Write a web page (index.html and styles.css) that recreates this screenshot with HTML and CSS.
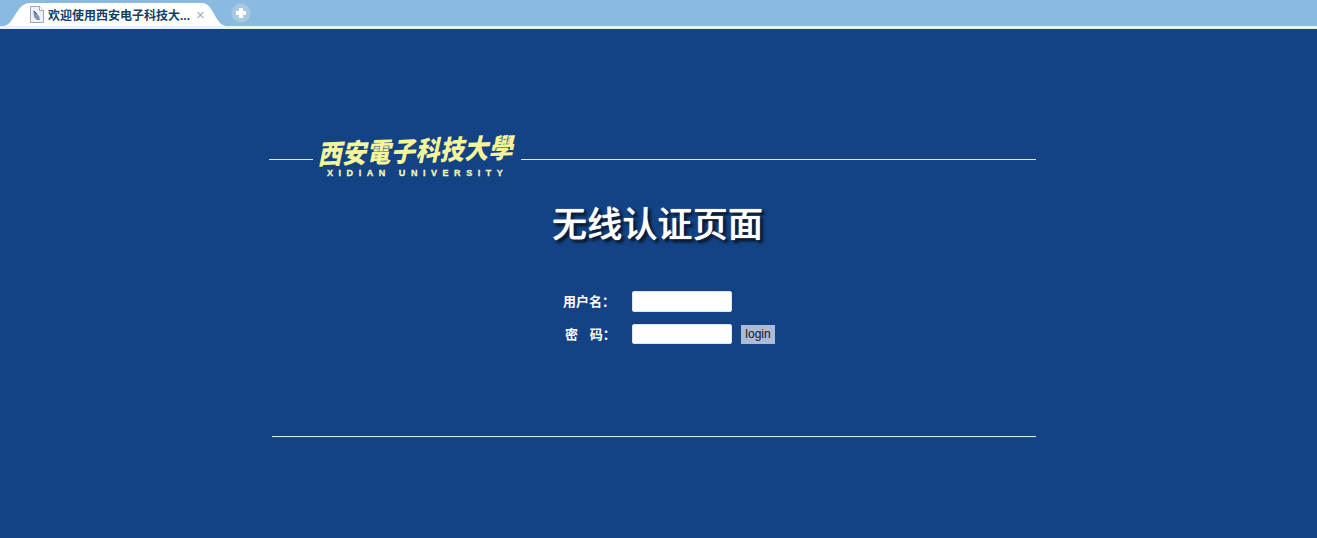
FILE: index.html
```html
<!DOCTYPE html>
<html lang="zh">
<head>
<meta charset="utf-8">
<title>无线认证页面</title>
<link rel="stylesheet" href="styles.css">
</head>
<body>
<header class="tabbar">
  <div class="tab">
    <svg class="tab-shape" width="240" height="26" viewBox="0 0 240 26"><path d="M4 26C15 24 16 3 30 3H202C214 3 214 24 226 26Z" fill="#fff"/></svg>
    <svg class="favicon" width="15" height="17" viewBox="0 0 15 17"><path d="M1.5.5h9l4 4v12h-13z" fill="#eef2f7" stroke="#9aa8ba"/><path d="M10.5.5v4h4" fill="#fff" stroke="#9aa8ba"/><path d="M4 4l6 6 1 4-3 0-3-3z" fill="#7d93b2"/><path d="M5 5l3 3" stroke="#2f4f7f"/></svg>
    <span class="tab-title">欢迎使用西安电子科技大...</span>
    <span class="tab-close">×</span>
  </div>
  <div class="newtab"><span class="newtab-plus"></span></div>
</header>
<main class="page">
  <section class="panel">
    <div class="brand-row">
      <span class="rule rule-short"></span>
      <div class="brand">
        <div class="brand-cn">西安電子科技大學</div>
        <div class="brand-en">XIDIAN UNIVERSITY</div>
      </div>
      <span class="rule rule-long"></span>
    </div>
    <h1 class="title">无线认证页面</h1>
    <form class="login">
      <label class="field-label" for="u">用户名：</label>
      <input class="field" id="u" type="text">
      <span></span>
      <label class="field-label field-label-inset" for="p">密&nbsp;&nbsp;&nbsp;&nbsp;码：</label>
      <input class="field" id="p" type="password">
      <button class="submit" type="button">login</button>
    </form>
    <div class="footer-band"><div class="footer-rule"></div></div>
  </section>
</main>
</body>
</html>
```
FILE: styles.css
```css
* { box-sizing: border-box; }
html, body { margin: 0; padding: 0; height: 100%; overflow: hidden; }
body { background: #134384; font-family: "Liberation Sans", "Noto Sans CJK SC", sans-serif; }

.tabbar {
  height: 29px;
  background: #8abae0;
  border-bottom: 3px solid #e9f2f9;
  display: flex;
  align-items: flex-start;
}
.tab {
  position: relative;
  width: 228px;
  height: 26px;
  display: flex;
  align-items: center;
  padding: 3px 0 0 29px;
}
.tab-shape { position: absolute; left: 0; top: 0; }
.favicon { position: relative; margin-right: 4px; }
.tab-title {
  position: relative;
  font-size: 12px;
  font-weight: 700;
  color: #123f63;
  white-space: nowrap;
  width: 148px;
}
.tab-close { position: relative; font-size: 15px; color: #9fb0c0; line-height: 1; }
.newtab {
  width: 20px; height: 20px;
  margin: 3px 0 0 3px;
  border-radius: 50%;
  background: #a7c9e4;
  border: 1px solid #9cc1df;
  display: flex; align-items: center; justify-content: center;
}
.newtab-plus { width: 10px; height: 10px;
  background:
    linear-gradient(#fff, #fff) center / 10px 4px no-repeat,
    linear-gradient(#fff, #fff) center / 4px 10px no-repeat; }

.page { display: flex; padding: 103px 0 0 269px; }
.panel { width: 767px; }

.brand-row { display: flex; align-items: flex-start; height: 46px; }
.rule { height: 1px; margin-top: 27px; background: #dfe8f2; display: block; }
.rule-short { width: 44px; }
.rule-long { flex: 1; }
.brand { width: 208px; padding-left: 6px; }
.brand-cn {
  font-family: "Noto Sans CJK TC", "Noto Sans CJK SC", sans-serif;
  font-size: 24px;
  font-weight: 900;
  line-height: 32px;
  letter-spacing: 0.5px;
  color: #f6f59a;
  white-space: nowrap;
  transform: translate(-3px, 4px) rotate(-2deg) skewX(-14deg) scaleY(1.12);
  transform-origin: left bottom;
  margin-top: 3px;
}
.brand-en {
  font-family: "Liberation Sans", sans-serif;
  font-size: 9px;
  font-weight: 700;
  line-height: 9px;
  letter-spacing: 5.55px;
  color: #f8f6b4;
  white-space: nowrap;
  padding-left: 8px;
  margin-top: 2px;
  -webkit-text-stroke: 0.3px #f8f6b4;
}

.title {
  margin: 24px 0 0 0;
  padding-left: 283px;
  height: 40px;
  font-family: "Noto Sans CJK SC", sans-serif;
  font-size: 35px;
  font-weight: 500;
  line-height: 40px;
  letter-spacing: 0.2px;
  color: #fff;
  white-space: nowrap;
  text-shadow: 0 0 1px #fff, 2px 2px 3px #0b1a30, 3px 3px 3px #0b1a30;
}

.login {
  margin-top: 49px;
  margin-left: 294px;
  display: grid;
  grid-template-columns: 69px 100px auto;
  grid-template-rows: 21px 20px;
  row-gap: 12px;
  align-items: center;
  justify-content: start;
}
.field-label {
  font-size: 13px;
  font-weight: 700;
  color: #fff;
  white-space: nowrap;
  font-family: "Noto Sans CJK SC", sans-serif;
  padding-bottom: 2px;
}
.field-label-inset { padding-left: 2px; }
.field {
  width: 100px;
  height: 100%;
  border: 1px solid #dbe6f2;
  border-radius: 2px;
  background: #fff;
  padding: 0;
}
.submit {
  margin-left: 9px;
  width: 34px;
  height: 19px;
  border: 0;
  padding: 0;
  background: #adbbd6;
  color: #0c1526;
  font-family: "Liberation Sans", sans-serif;
  font-size: 12px;
}
.footer-band {
  margin-top: 92px;
  padding-left: 3px;
}
.footer-rule {
  height: 1px;
  background: #d8e8f7;
  box-shadow: 0 1px 1px #2a4f7c;
}
```
